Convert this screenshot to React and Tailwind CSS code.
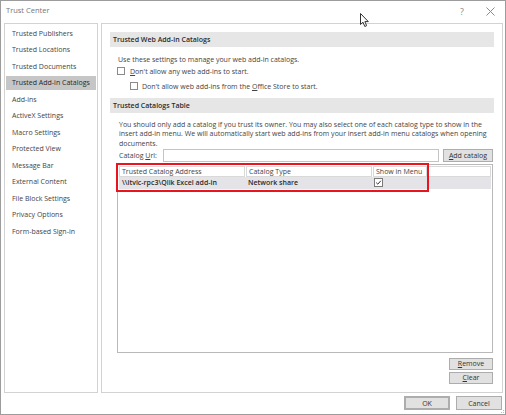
import React from "react";

const navItems = [
  "Trusted Publishers",
  "Trusted Locations",
  "Trusted Documents",
  "Trusted Add-in Catalogs",
  "Add-ins",
  "ActiveX Settings",
  "Macro Settings",
  "Protected View",
  "Message Bar",
  "External Content",
  "File Block Settings",
  "Privacy Options",
  "Form-based Sign-in",
];

function Box({ className = "" }) {
  return <div className={"w-[8px] h-[8px] border border-[#8a8a8a] bg-white shrink-0 " + className} />;
}

function Btn({ children, className = "" }) {
  return (
    <div className={"flex items-center justify-center bg-[#e1e1e1] border border-[#adadad] text-[#333] " + className}>
      {children}
    </div>
  );
}

export default function App() {
  return (
    <div
      className="relative w-[506px] h-[415px] bg-white border border-[#9c9c9c] text-[#444] text-[7px] leading-none overflow-hidden"
      style={{ fontFamily: '"Open Sans", "Noto Sans", "Liberation Sans", sans-serif' }}
    >
      {/* title bar */}
      <div className="h-[22px] flex items-center justify-between pl-[5px] pr-[9px] pb-[2px]">
        <span className="text-[7.5px] text-[#777]">Trust Center</span>
        <div className="flex items-center gap-[22px] text-[#8a8a8a]">
          <span className="text-[9px]">?</span>
          <svg width="9" height="9" viewBox="0 0 9 9" className="mr-[1px]">
            <path d="M0.5 0.5 L8.5 8.5 M8.5 0.5 L0.5 8.5" stroke="#8a8a8a" strokeWidth="1" />
          </svg>
        </div>
      </div>

      {/* body */}
      <div className="flex gap-[3px] pl-[3px] h-[370px]">
        {/* nav */}
        <div className="w-[94px] h-full border border-[#d2d2d2] pt-[2px] px-[1px] flex flex-col gap-[2.5px]">
          {navItems.map((t) => (
            <div
              key={t}
              className={
                "h-[14px] flex items-center pl-[6px] whitespace-nowrap " +
                (t === "Trusted Add-in Catalogs" ? "bg-[#c6c6c6] text-[#262626]" : "")
              }
            >
              {t}
            </div>
          ))}
        </div>

        {/* content */}
        <div className="w-[402px] h-full border border-[#d2d2d2] px-[8px] pt-[8px] flex flex-col">
          <div className="h-[15px] bg-[#e6e6e6] flex items-center pl-[3px] font-semibold text-[#2b2b2b]">
            Trusted Web Add-in Catalogs
          </div>
          <div className="mt-[7px] h-[10px] flex items-center pl-[8px]">
            Use these settings to manage your web add-in catalogs.
          </div>
          <div className="mt-[2px] h-[10px] flex items-center pl-[7px] gap-[5px]">
            <Box />
            <span>
              <span className="underline">D</span>on't allow any web add-ins to start.
            </span>
          </div>
          <div className="mt-[5px] h-[10px] flex items-center pl-[20px] gap-[4px]">
            <Box />
            <span>
              Don't allow web add-ins from the <span className="underline">O</span>ffice Store to start.
            </span>
          </div>
          <div className="mt-[7px] h-[15px] bg-[#e6e6e6] flex items-center pl-[3px] font-semibold text-[#2b2b2b]">
            Trusted Catalogs Table
          </div>
          <div className="mt-[7px] pl-[9px] leading-[9.3px] whitespace-nowrap">
            <div>
              You should only add a catalog if you trust its owner. You may also select one of each catalog type to show in the
            </div>
            <div>
              insert add-in menu. We will automatically start web add-ins from your insert add-in menu catalogs when opening
            </div>
            <div>documents.</div>
          </div>
          <div className="mt-[1px] h-[13px] flex items-center pl-[9px] pr-[1px]">
            <span className="w-[44px]">
              Catalog <span className="underline">U</span>rl:
            </span>
            <div className="w-[276px] h-full border border-[#c4c4c4] bg-white" />
            <Btn className="ml-[4px] w-[50px] h-full">
              <span>
                <span className="underline">A</span>dd catalog
              </span>
            </Btn>
          </div>

          {/* table */}
          <div className="relative mt-[2px] ml-[7px] mr-[1px] h-[189px] border border-[#b9b9b9] px-[1px] pt-[1px]">
            <div className="flex gap-[1px] h-[11px]">
              <div className="w-[126px] border border-[#d9d9d9] flex items-center pl-[2px]">Trusted Catalog Address</div>
              <div className="w-[126px] border border-[#d9d9d9] flex items-center pl-[2px]">Catalog Type</div>
              <div className="w-[54px] border border-[#d9d9d9] flex items-center pl-[2px]">Show in Menu</div>
              <div className="flex-1 border border-[#d9d9d9]" />
            </div>
            <div className="flex h-[12px] bg-[#e3e3e8] font-semibold text-[#2b2b2b]">
              <div className="w-[127px] flex items-center pl-[3px] whitespace-nowrap">\\itvic-rpc3\Qlik Excel add-in</div>
              <div className="w-[127px] flex items-center pl-[2px]">Network share</div>
              <div className="w-[54px] flex items-center pl-[1px]">
                <div className="w-[9px] h-[9px] border border-[#7a7a7a] bg-white flex items-center justify-center">
                  <svg width="7" height="7" viewBox="0 0 7 7">
                    <path d="M1.2 3.6 L2.8 5.2 L5.8 1.8" fill="none" stroke="#333" strokeWidth="1" />
                  </svg>
                </div>
              </div>
            </div>
            <div className="absolute left-[-2px] top-[-2px] w-[313px] h-[29px] border-2 border-[#e8141e]" />
          </div>

          <div className="mt-[5px] self-end mr-[1px] flex flex-col gap-[2px]">
            <Btn className="w-[44px] h-[12px]">
              <span>
                <span className="underline">R</span>emove
              </span>
            </Btn>
            <Btn className="w-[44px] h-[12px]">
              <span>
                <span className="underline">C</span>lear
              </span>
            </Btn>
          </div>
        </div>
      </div>

      {/* footer */}
      <div className="flex justify-end gap-[6px] pr-[3px] mt-[3px]">
        <Btn className="w-[46px] h-[14px] border-[#2a7a4b] border-2">OK</Btn>
        <Btn className="w-[46px] h-[14px]">Cancel</Btn>
      </div>

      {/* resize grip */}
      <svg className="absolute right-[0px] bottom-[0px]" width="4" height="4" viewBox="0 0 4 4">
        <rect x="2" y="0" width="1" height="1" fill="#bbb" />
        <rect x="0" y="2" width="1" height="1" fill="#bbb" />
        <rect x="2" y="2" width="1" height="1" fill="#bbb" />
      </svg>

      {/* mouse cursor */}
      <svg className="absolute left-[359px] top-[12px]" width="10" height="15" viewBox="0 0 10 15">
        <path
          d="M0.5 0.5 L0.5 11.5 L3 9.2 L4.8 13.5 L6.6 12.7 L4.9 8.6 L8.3 8.6 Z"
          fill="white"
          stroke="#333"
          strokeWidth="1"
          strokeLinejoin="round"
        />
      </svg>
    </div>
  );
}
